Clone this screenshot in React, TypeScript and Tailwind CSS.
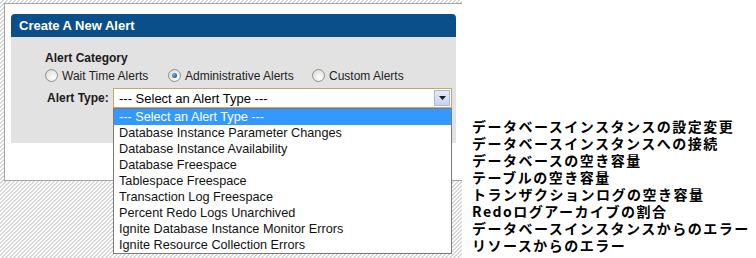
import React from 'react';

const alertTypes = [
  'Database Instance Parameter Changes',
  'Database Instance Availability',
  'Database Freespace',
  'Tablespace Freespace',
  'Transaction Log Freespace',
  'Percent Redo Logs Unarchived',
  'Ignite Database Instance Monitor Errors',
  'Ignite Resource Collection Errors',
];

const translations = [
  'データベースインスタンスの設定変更',
  'データベースインスタンスへの接続',
  'データベースの空き容量',
  'テーブルの空き容量',
  'トランザクションログの空き容量',
  'Redoログアーカイブの割合',
  'データベースインスタンスからのエラー',
  'リソースからのエラー',
];

function Radio({ checked }: { checked?: boolean }) {
  return (
    <span className="w-[13px] h-[13px] rounded-full border border-[#8e8f8f] bg-[radial-gradient(circle_at_65%_70%,#ffffff_0%,#e2e2dc_70%,#cfcfc8_100%)] flex items-center justify-center flex-shrink-0">
      {checked && (
        <span className="w-[5px] h-[5px] rounded-full bg-[radial-gradient(circle_at_35%_35%,#7fb3e8_0%,#1f5a9c_70%)]" />
      )}
    </span>
  );
}

export default function App() {
  return (
    <div className="w-[756px] h-[258px] bg-white flex overflow-hidden font-['Liberation_Sans',Arial,sans-serif] text-black">
      {/* Screenshot of the form */}
      <div className="relative w-[462px] h-full flex-shrink-0 overflow-hidden bg-[repeating-linear-gradient(135deg,#ffffff_0px,#ffffff_1.6px,#d6d6d6_1.6px,#d6d6d6_2.83px)] pt-[3px] pl-[4px]">
        <div className="w-[470px] h-[178px] bg-white border border-r-0 border-[#a3a3a3] pt-[10px] pl-[6px]">
          <div className="w-[445px] h-[23px] bg-[#0a4f89] rounded-t-[4px] flex items-center pl-[8px]">
            <span className="text-white font-bold text-[13px] leading-none">Create A New Alert</span>
          </div>
          <div className="w-[445px] h-[106px] bg-[#e2e2e2] pt-[14px]">
            <p className="pl-[34px] font-bold text-[12px] leading-[15px] text-[#1a1a1a]">Alert Category</p>
            <div className="flex items-center h-[17px] mt-[1px] pl-[34px] text-[12px] text-[#222]">
              <label className="flex items-center gap-[4px] w-[123px]">
                <Radio />
                <span>Wait Time Alerts</span>
              </label>
              <label className="flex items-center gap-[4px] w-[144px]">
                <Radio checked />
                <span>Administrative Alerts</span>
              </label>
              <label className="flex items-center gap-[4px]">
                <Radio />
                <span>Custom Alerts</span>
              </label>
            </div>
            <div className="flex items-center h-[20px] mt-[4px] pl-[36px]">
              <span className="font-bold text-[12px] w-[66px] text-[#1a1a1a]">Alert Type:</span>
              <div className="w-[339px] h-[20px] border border-[#c0a86f] bg-white flex items-center justify-between pl-[5px] pr-[1px]">
                <span className="text-[13px] leading-none">--- Select an Alert Type ---</span>
                <span className="w-[16px] h-[16px] border border-[#a8b8d0] bg-[linear-gradient(#e4ecf8,#c5d5ee)] flex items-center justify-center">
                  <svg width="7" height="4" viewBox="0 0 7 4">
                    <path d="M0 0h7L3.5 4z" fill="#1d1d1d" />
                  </svg>
                </span>
              </div>
            </div>
          </div>
        </div>

        {/* Open dropdown list */}
        <div className="absolute left-[113px] top-[108px] w-[339px] bg-white border border-[#7b7b7b] text-[12.7px] leading-[16px]">
          <div className="h-[16px] bg-[#3399ff] text-white pl-[5px]">--- Select an Alert Type ---</div>
          {alertTypes.map((t) => (
            <div key={t} className="h-[16px] pl-[5px] text-[#111] whitespace-nowrap">
              {t}
            </div>
          ))}
        </div>
      </div>

      {/* Japanese translations */}
      <div className="pl-[10px] pt-[118px] font-['Noto_Sans_CJK_JP','Noto_Sans',sans-serif] font-bold text-[14px] tracking-[1.5px] leading-[17px] text-black whitespace-nowrap">
        {translations.map((t) => (
          <div key={t}>{t}</div>
        ))}
      </div>
    </div>
  );
}
